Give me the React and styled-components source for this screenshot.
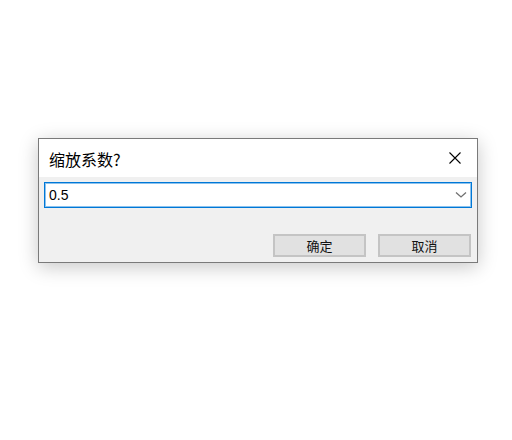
import React from "react";
import styled, { createGlobalStyle } from "styled-components";

const Global = createGlobalStyle`
  html, body { margin: 0; padding: 0; background: #ffffff; }
  body { font-family: "Liberation Sans", "Noto Sans CJK SC", sans-serif; }
`;

const Page = styled.div`
  width: 512px;
  height: 440px;
  padding: 138px 0 0 38px;
  box-sizing: border-box;
`;

const Dialog = styled.div`
  width: 440px;
  height: 125px;
  box-sizing: border-box;
  border: 1px solid #7a7a7a;
  background: #f0f0f0;
  box-shadow: 0 4px 18px rgba(0, 0, 0, 0.22);
  display: flex;
  flex-direction: column;
`;

const TitleBar = styled.div`
  height: 38px;
  background: #ffffff;
  display: flex;
  align-items: center;
  justify-content: space-between;
  padding: 0 10px 0 10px;
`;

const Title = styled.div`
  font-family: "Noto Sans CJK SC", sans-serif;
  font-size: 16px;
  color: #000;
  padding-top: 1px;
`;

const Close = styled.div`
  width: 20px;
  height: 20px;
  display: flex;
  align-items: center;
  justify-content: center;
  margin-right: 2px;
`;

const Body = styled.div`
  flex: 1;
  display: flex;
  flex-direction: column;
  padding: 5px 5px 5px 5px;
`;

const Combo = styled.div`
  height: 26px;
  box-sizing: border-box;
  border: 1px solid #0078d7;
  box-shadow: inset 0 0 0 1px rgba(0, 120, 215, 0.45);
  background: #fff;
  display: flex;
  align-items: center;
  justify-content: space-between;
  padding: 0 4px 0 4px;
`;

const Value = styled.span`
  font-family: "Liberation Sans", sans-serif;
  font-size: 14px;
  color: #000;
`;

const Buttons = styled.div`
  margin-top: auto;
  display: flex;
  justify-content: flex-end;
  gap: 12px;
  padding-right: 1px;
`;

const Button = styled.div`
  width: 93px;
  height: 23px;
  box-sizing: border-box;
  border: 2px solid #c4c4c4;
  background: #e1e1e1;
  display: flex;
  align-items: center;
  justify-content: center;
  font-family: "Noto Sans CJK SC", sans-serif;
  font-size: 13px;
  color: #111;
`;

export default function App() {
  return (
    <Page>
      <Global />
      <Dialog>
        <TitleBar>
          <Title>缩放系数?</Title>
          <Close>
            <svg width="12" height="12" viewBox="0 0 12 12">
              <path d="M0.5 0.5 L11.5 11.5 M11.5 0.5 L0.5 11.5" stroke="#000" strokeWidth="1.1" fill="none" />
            </svg>
          </Close>
        </TitleBar>
        <Body>
          <Combo>
            <Value>0.5</Value>
            <svg width="12" height="8" viewBox="0 0 12 8">
              <path d="M1 1.5 L6 6 L11 1.5" stroke="#707070" strokeWidth="1.3" fill="none" />
            </svg>
          </Combo>
          <Buttons>
            <Button>确定</Button>
            <Button>取消</Button>
          </Buttons>
        </Body>
      </Dialog>
    </Page>
  );
}
